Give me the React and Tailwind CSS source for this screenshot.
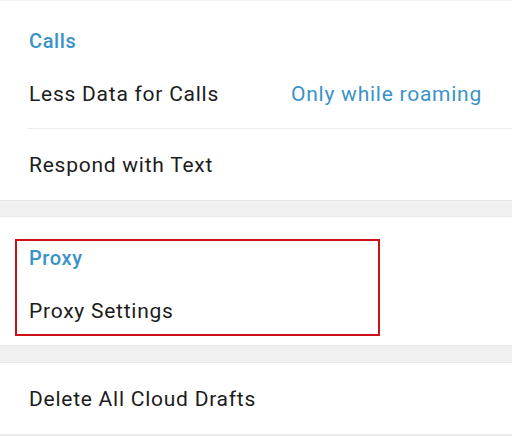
import React from 'react';

const font = { fontFamily: 'Roboto, "Noto Sans", sans-serif' };

const Row = ({ label, value, className = '' }) => (
  <div className={`flex items-center justify-between pl-[29px] pr-[30px] ${className}`}>
    <span className="text-[21px] leading-6 tracking-[0.75px] text-[#1c1c1c]">{label}</span>
    {value && <span className="text-[21px] leading-6 tracking-[0.75px] text-[#3a93c8]">{value}</span>}
  </div>
);

const Gap = ({ className = '' }) => (
  <div className={`bg-[#f0f0f0] border-t border-[#e6e6e6] border-b border-b-[#e9e9e9] ${className}`} />
);

export default function App() {
  return (
    <div className="w-[512px] h-[436px] overflow-hidden bg-white" style={font}>
      <div className="h-px bg-[#f2f2f2]" />

      {/* Calls */}
      <div className="bg-white">
        <div className="pl-[29px] pt-[28px] pb-[7px] leading-6 text-[20px] tracking-[0.6px] font-medium text-[#3a93c8]">
          Calls
        </div>
        <Row label="Less Data for Calls" value="Only while roaming" className="h-[68px]" />
        <div className="ml-[28px] h-px bg-[#ececec]" />
        <Row label="Respond with Text" className="h-[71px]" />
      </div>

      <Gap className="h-[17px]" />

      {/* Proxy */}
      <div className="bg-white pt-[22px] pb-[9px]">
        <div className="ml-[15px] w-[365px] border-2 border-[#cc1016] pl-[12px] pt-[5px] pb-[11px]">
          <div className="text-[20px] leading-6 tracking-[0.6px] font-medium text-[#3a93c8]">Proxy</div>
          <div className="mt-[29px] text-[21px] leading-6 tracking-[0.75px] text-[#1c1c1c]">Proxy Settings</div>
        </div>
      </div>

      <Gap className="h-[18px]" />

      <Row label="Delete All Cloud Drafts" className="h-[71px]" />
      <div className="h-[2px] bg-[#ededed]" />
    </div>
  );
}
